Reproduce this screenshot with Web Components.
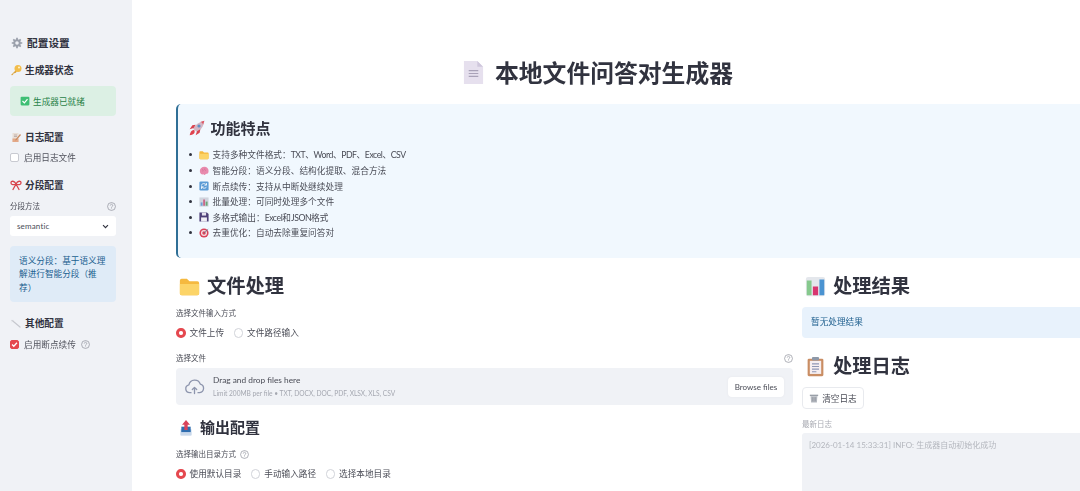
<!DOCTYPE html>
<html lang="zh">
<head>
<meta charset="utf-8">
<title>本地文件问答对生成器</title>
<style>
  html, body { margin: 0; height: 100%; overflow: hidden; background: #fff; }
  body {
    font-family: Lato, "Noto Sans CJK SC", "Noto Sans", sans-serif;
    color: #31333f;
  }
  /* reference latin is a narrower face than Lato */
  .tight { letter-spacing: -.45px; }
</style>
</head>
<body>

<app-shell>
  <side-bar slot="side">
    <side-head level="1" icon="gear" style="margin-top:0">配置设置</side-head>
    <side-head icon="key" style="margin-top:10px">生成器状态</side-head>
    <note-box kind="success" icon="check" style="margin-top:8px">生成器已就绪</note-box>
    <side-head icon="memo" style="margin-top:13px">日志配置</side-head>
    <check-row style="margin-top:5px">启用日志文件</check-row>
    <side-head icon="ribbon" style="margin-top:13px">分段配置</side-head>
    <field-label help style="margin-top:7px">分段方法</field-label>
    <select-box style="margin-top:4px">semantic</select-box>
    <note-box kind="info" style="margin-top:10px">语义分段：基于语义理解进行智能分段（推荐）</note-box>
    <side-head icon="wrench" style="margin-top:13px">其他配置</side-head>
    <check-row checked help style="margin-top:6px">启用断点续传</check-row>
  </side-bar>

  <main-area>
    <page-title>本地文件问答对生成器</page-title>
    <feature-card>
      <feature-item icon="folder">支持多种文件格式：<span class="tight">TXT、Word、PDF、Excel、CSV</span></feature-item>
      <feature-item icon="brain">智能分段：语义分段、结构化提取、混合方法</feature-item>
      <feature-item icon="arrows">断点续传：支持从中断处继续处理</feature-item>
      <feature-item icon="chart">批量处理：可同时处理多个文件</feature-item>
      <feature-item icon="floppy">多格式输出：<span class="tight">Excel</span>和<span class="tight">JSON</span>格式</feature-item>
      <feature-item icon="target">去重优化：自动去除重复问答对</feature-item>
    </feature-card>

    <two-cols>
      <div slot="left">
        <section-head icon="folder">文件处理</section-head>
        <field-label style="margin-top:7px">选择文件输入方式</field-label>
        <radio-row style="margin-top:7px">
          <radio-opt checked>文件上传</radio-opt>
          <radio-opt>文件路径输入</radio-opt>
        </radio-row>
        <field-label help style="margin-top:12px">选择文件</field-label>
        <file-drop style="margin-top:4px"></file-drop>
        <section-head small icon="outbox" style="margin-top:13px">输出配置</section-head>
        <field-label help="inline" style="margin-top:10px">选择输出目录方式</field-label>
        <radio-row style="margin-top:7px">
          <radio-opt checked>使用默认目录</radio-opt>
          <radio-opt>手动输入路径</radio-opt>
          <radio-opt>选择本地目录</radio-opt>
        </radio-row>
      </div>
      <div slot="right">
        <section-head icon="bars">处理结果</section-head>
        <note-box kind="info" wide style="margin-top:7px">暂无处理结果</note-box>
        <section-head icon="clipboard" style="margin-top:14px">处理日志</section-head>
        <plain-button icon="trash" style="margin-top:7px">清空日志</plain-button>
        <field-label muted style="margin-top:9px">最新日志</field-label>
        <log-area style="margin-top:3px">[2026-01-14 15:33:31] INFO: 生成器自动初始化成功</log-area>
      </div>
    </two-cols>
  </main-area>
</app-shell>

<script>
// all the little emoji are drawn here, viewBox is always 24x24
const ICONS = {
  gear: `<circle cx="12" cy="12" r="7.5" fill="#a4a9b3"/>
    <g stroke="#989ea9" stroke-width="3.4"><path d="M12 1.5v21M1.5 12h21M4.6 4.6l14.8 14.8M19.4 4.6 4.6 19.4"/></g>
    <circle cx="12" cy="12" r="3.6" fill="#eef0f4"/>`,
  key: `<path d="M2 22 11 13l3 2-3 3-1.500-.5-1 1.500-1.500-.3-.5 1.800-2 2z" fill="#d9a033"/>
    <circle cx="16" cy="9" r="7" fill="#f2bd4b"/><circle cx="18" cy="7" r="2" fill="#fff3cf"/>`,
  check: `<rect x="1.500" y="1.500" width="21" height="21" rx="2.500" fill="#3fbf74"/>
    <path d="m6 12 4.500 4.500 7.500-9" fill="none" stroke="#fff" stroke-width="2.800"/>`,
  memo: `<path d="M5 4h12v18H5z" fill="#e9dfd6"/><path d="M5 15h12v7H5z" fill="#e3a989"/>
    <path d="M8 8h6M8 11h6" stroke="#a99" stroke-width="1.300"/>
    <path d="m11 17 9-11 2 2-9 10-3 1z" fill="#c98a5e"/>`,
  ribbon: `<g fill="none" stroke="#d8444c" stroke-width="2.600" stroke-linecap="round">
    <path d="M12 10C9 3 2 3 2 8c0 4 6 4 10 2 4 2 10 2 10-2 0-5-7-5-10 2z"/>
    <path d="M12 10 6 21M12 10l6 11"/></g>`,
  wrench: `<path d="M4 7 8 10 20 20" fill="none" stroke="#c6c8ce" stroke-width="2.400" stroke-linecap="round"/>
    <path d="M3 10 8 6" stroke="#dcdee3" stroke-width="1.600"/>`,
  doc: `<path d="M2 0h14l6 6v18H2z" fill="#e6e0ee"/><path d="M16 0v6h6z" fill="#cfc7dc"/>
    <path d="M7 10h10M7 13h10M7 16h10" stroke="#a9a2b8" stroke-width="1.200"/>`,
  rocket: `<path d="M6 13C9 7 15 3 23 1c-1 8-5 14-11 17z" fill="#d3b6c4"/>
    <path d="M17 3c2 0 3.500 1.500 4 4l2-6z" fill="#e0535f"/>
    <circle cx="15" cy="9" r="2.400" fill="#5b93c9"/>
    <path d="M7 12 1 14l4-6 5-1zM12 17l-2 6 6-4 1-5z" fill="#d8434f"/>
    <path d="M8 15c-4-1-6 3-7 8 5-1 9-3 7-8z" fill="#e0434e"/>`,
  folder: `<path d="M1 5q0-2 2-2h6l3 3h9q2 0 2 2v12q0 2-2 2H3q-2 0-2-2z" fill="#f5b93f"/>
    <path d="M1 9h22v11q0 2-2 2H3q-2 0-2-2z" fill="#fcd468"/>`,
  brain: `<path d="M2 12c0-6 5-10 11-10s10 4 10 10-3 7-7 7c-1 3-4 3-5 1-6 1-9-3-9-8z" fill="#e88aad"/>
    <path d="M8 8c2 1 2 3 1 5M14 6c-1 2 0 4 2 5" fill="none" stroke="#c9668d" stroke-width="1.500"/>`,
  arrows: `<rect x="1" y="1" width="22" height="22" rx="3" fill="#5b9bd5"/>
    <g fill="none" stroke="#fff" stroke-width="2"><path d="M6 11c0-6 9-6 11-2M6 13c1 5 10 6 12 1"/><path d="M18 5v5h-5M6 19v-5h5"/></g>`,
  chart: `<rect x="1" y="1" width="22" height="22" fill="#cfd4dd"/>
    <path d="M4 21v-8h4.500v8z" fill="#6f9fd3"/><path d="M10 21V6h4.500v15z" fill="#c9678a"/><path d="M16 21v-10h4.500v10z" fill="#6aa776"/>`,
  floppy: `<path d="M1 1h18l4 4v18H1z" fill="#4d3f78"/><rect x="7" y="1.500" width="10" height="7" fill="#e5e1ee"/>
    <rect x="5" y="13" width="14" height="10" fill="#efedf4"/>`,
  target: `<circle cx="12" cy="12" r="11" fill="#d9435a"/><circle cx="12" cy="12" r="7.200" fill="#f3e3e6"/>
    <circle cx="12" cy="12" r="4.200" fill="#d9435a"/><path d="m12 12 10-9" stroke="#5a6f8a" stroke-width="1.800"/>`,
  outbox: `<path d="M4 14h16v9H4z" fill="#a9c2e0"/><path d="M5 10h14v8H5z" fill="#2f6eb0"/>
    <path d="M12 0 18 7h-3.500v8h-5V7H6z" fill="#d9435a"/><path d="M4 18.500h16V23H4z" fill="#c9d8ea"/>`,
  bars: `<rect x="1" y="1" width="22" height="22" rx="2.500" fill="#e4e7ec"/>
    <path d="M2 5h5.500v17H3q-1 0-1-1z" fill="#86c98d"/><path d="M9 12h6v10H9z" fill="#d8366f"/>
    <path d="M16.500 4H22v17q0 1-1 1h-4.500z" fill="#4a93d1"/>`,
  clipboard: `<rect x="3" y="3" width="18" height="20" rx="1.500" fill="#c98d63"/>
    <rect x="5.500" y="5.500" width="13" height="15" fill="#f6eef0"/><rect x="8" y="1" width="8" height="4" rx="1" fill="#8d98a8"/>
    <path d="M8 9h8M8 12h8M8 15h8M8 18h5" stroke="#8f97b5" stroke-width="1.200"/>`,
  trash: `<path d="M2 4h20v3.500H2z" fill="#9aa0a8"/><path d="M4 7.500h16l-1 15H5z" fill="#b4b8bf"/>
    <path d="M8.500 10v10M12 10v10M15.500 10v10" stroke="#8a9098" stroke-width="1.300"/>`,
  cloud: `<g fill="none" stroke="#8d95ad" stroke-width="1.500" stroke-linejoin="round" stroke-linecap="round">
    <path d="M8 19H6.500a4.500 4.500 0 0 1-.9-8.900A6.800 6.800 0 0 1 18.600 9.200 5 5 0 0 1 18 19h-2"/>
    <path d="M12 20v-7M9.500 15.500 12 13l2.500 2.500"/></g>`
};

function define(tag, css, html, init) {
  customElements.define(tag, class extends HTMLElement {
    constructor() {
      super();
      let root = this.attachShadow({mode: 'open'});
      root.innerHTML = `<style>${css}</style>` + (typeof html === 'function' ? html(this) : html);
    }
    connectedCallback() {
      let root = this.shadowRoot;
      if (init && !this._done) { this._done = true; init(this, root); }
    }
  });
}

// a help circle used beside labels and checkboxes
const HELP = `<svg width="9" height="9" viewBox="0 0 16 16" fill="none" stroke="#8b8d98" stroke-width="1.200"><circle cx="8" cy="8" r="7"/><path d="M5.800 6.200a2.200 2.200 0 1 1 3.400 1.900c-.8.500-1.200 1-1.200 1.900M8 11.600v1"/></svg>`;

define('x-icon', ':host{display:inline-flex;flex:none} svg{display:block}', '', (el, root) => {
  let s = el.getAttribute('size') || 12;
  root.innerHTML += `<svg width="${s}" height="${s}" viewBox="0 0 24 24">${ICONS[el.getAttribute('name')]}</svg>`;
});

// the reference is a soft, rescaled capture, hence the small blur
define('app-shell', `
  :host { display: grid; grid-template-columns: 132px 1fr; height: 491px; overflow: hidden; filter: blur(.35px); }
`, `<slot name="side"></slot><slot></slot>`);

define('side-bar', `
  :host { display: block; background: #f0f2f6; padding: 34px 16px 0 10px; height: 491px; box-sizing: border-box; }
`, `<slot></slot>`);

define('side-head', `
  :host { display: flex; align-items: center; gap: 3px; font-size: 9.700px; font-weight: 700; line-height: 16px; color: #31333f; }
  :host([level="1"]) { font-size: 10.700px; line-height: 18px; gap: 4px; padding-left: 1px; }
`, el => `<x-icon name="${el.getAttribute('icon')}" size="12"></x-icon><slot></slot>`);

define('note-box', `
  :host { display: block; border-radius: 4px; font-size: 8.650px; box-sizing: border-box; }
  :host([kind="success"]) { background: #dcf0e4; color: #2a8248; height: 30px; padding: 0 10px; display: flex; align-items: center; gap: 3px; }
  :host([kind="info"]) { background: #dfebf7; color: #20608f; padding: 7.500px 9px 8px 9px; line-height: 13.500px; }
  :host([wide]) { background: #e8f2fc; height: 31px; padding: 0 9px; line-height: 30px; }
`, el => (el.getAttribute('icon') ? `<x-icon name="${el.getAttribute('icon')}" size="10"></x-icon>` : '') + `<slot></slot>`);

define('check-row', `
  :host { display: flex; align-items: center; gap: 5px; font-size: 8.650px; line-height: 14px; color: #50525c; }
  .box { width: 9px; height: 9px; border-radius: 2px; background: #fff; border: 1px solid #c8cad1; box-sizing: border-box; flex: none; }
  :host([checked]) .box { background: #e5484f; border-color: #e5484f; position: relative; }
  svg { display: block; }
  .tip { margin-left: 0; display: inline-flex; }
  .t { position: relative; top: .5px; }
`, el => `<span class="box">${el.hasAttribute('checked') ? '<svg width="7" height="7" viewBox="0 0 10 10"><path d="m1.500 5 2.500 2.500 4.500-5" fill="none" stroke="#fff" stroke-width="1.800"/></svg>' : ''}</span><span class="t"><slot></slot></span>${el.hasAttribute('help') ? `<span class="tip">${HELP}</span>` : ''}`);

define('field-label', `
  :host { display: flex; align-items: center; font-size: 7.500px; line-height: 12px; height: 12px; color: #4a4c56; }
  :host([muted]) { color: #a9abb3; }
  .t { position: relative; top: .7px; }
  .tip { margin-left: auto; display: inline-flex; }
  :host([help="inline"]) .tip { margin-left: 4px; }
`, el => `<span class="t"><slot></slot></span>${el.hasAttribute('help') ? `<span class="tip">${HELP}</span>` : ''}`);

define('select-box', `
  :host { display: flex; align-items: center; justify-content: space-between; height: 20px; background: #fff; border-radius: 3px; padding: 0 7px; font-size: 8px; color: #4a4c56; letter-spacing: .15px; }
  svg { display: block; }
`, `<slot></slot><svg width="7" height="5" viewBox="0 0 10 7"><path d="m1.500 1.500 3.500 3.500 3.500-3.500" fill="none" stroke="#31333f" stroke-width="1.700"/></svg>`);

define('main-area', `
  :host { display: block; padding: 52px 0 0 44px; width: 950px; overflow: hidden; }
`, `<slot></slot>`);

define('page-title', `
  :host { display: flex; justify-content: center; align-items: center; gap: 10px; width: 843px; height: 40px; font-size: 23.800px; font-weight: 700; color: #31333f; }
  .t { position: relative; top: -1px; }
`, `<x-icon name="doc" size="23"></x-icon><span class="t"><slot></slot></span>`);

define('feature-card', `
  :host { display: block; margin-top: 12px; height: 154px; box-sizing: border-box; background: #f1f8fe; border-left: 2.500px solid #2f6f96; border-radius: 5px; padding: 14px 0 0 10.500px; }
  h3 { margin: 0; display: flex; align-items: center; gap: 6px; font-size: 15px; line-height: 20px; font-weight: 700; color: #31333f; }
  .list { margin-top: 9.200px; }
`, `<h3><x-icon name="rocket" size="16"></x-icon>功能特点</h3><div class="list"><slot></slot></div>`);

define('feature-item', `
  :host { display: flex; align-items: center; height: 15.600px; font-size: 8.700px; color: #4a4c56; position: relative; }
  .dot { width: 3px; height: 3px; border-radius: 50%; background: #31333f; margin-left: .5px; margin-right: 7px; flex: none; }
  x-icon { margin-right: 3.500px; }
  .t { white-space: pre; }
`, el => `<span class="dot"></span><x-icon name="${el.getAttribute('icon')}" size="10"></x-icon><span class="t"><slot></slot></span>`);

define('two-cols', `
  :host { display: grid; grid-template-columns: 617px 1fr; gap: 9px; margin-top: 14px; }
`, `<slot name="left"></slot><slot name="right"></slot>`);

define('section-head', `
  :host { display: flex; align-items: center; gap: 7px; height: 28px; font-size: 19.300px; font-weight: 700; color: #31333f; padding-left: 3px; }
  .t { position: relative; top: -.7px; }
  :host([small]) { height: 20px; font-size: 15px; gap: 6px; padding-left: 2px; }
  :host([small]) .t { top: -1.500px; }
`, el => `<x-icon name="${el.getAttribute('icon')}" size="${el.hasAttribute('small') ? 16 : 21}"></x-icon><span class="t"><slot></slot></span>`);

define('radio-row', `
  :host { display: flex; gap: 9.500px; }
`, `<slot></slot>`);

define('radio-opt', `
  :host { display: flex; align-items: center; gap: 4px; font-size: 8.650px; line-height: 14px; color: #4a4c56; }
  .dot { width: 9.500px; height: 9.500px; border-radius: 50%; box-sizing: border-box; border: 1px solid #d0d2d8; background: #fff; flex: none; }
  :host([checked]) .dot { border: 3.200px solid #e5484f; }
`, `<span class="dot"></span><slot></slot>`);

define('file-drop', `
  :host { display: flex; align-items: center; height: 37px; background: #f0f2f6; border-radius: 4px; padding: 0 9px 0 8px; }
  .txt { margin-left: 8px; flex: 1; }
  .a { font-size: 8.300px; line-height: 13px; color: #4a4c56; }
  .b { font-size: 6.600px; line-height: 13px; color: #a4a7b0; }
  button { font: inherit; font-size: 8px; color: #4a4c56; background: #fff; border: 0; box-shadow: 0 0 2px #e4e6ea; border-radius: 4px; height: 20px; width: 56px; padding: 0; }
`, `<x-icon name="cloud" size="21"></x-icon>
   <div class="txt"><div class="a">Drag and drop files here</div><div class="b">Limit 200MB per file • TXT, DOCX, DOC, PDF, XLSX, XLS, CSV</div></div>
   <button>Browse files</button>`);

define('plain-button', `
  :host { display: flex; width: 62px; height: 22px; box-sizing: border-box; align-items: center; justify-content: center; gap: 3px; border: 1px solid #e8eaee; border-radius: 4px; font-size: 8.650px; color: #4a4c56; background: #fff; }
`, el => `<x-icon name="${el.getAttribute('icon')}" size="10"></x-icon><slot></slot>`);

define('log-area', `
  :host { display: block; height: 70px; background: #f0f2f6; border-radius: 3px 0 0 0; padding: 6px 7px; box-sizing: border-box; font-size: 8px; line-height: 12px; color: #b3b6bd; }
`, `<slot></slot>`);
</script>
</body>
</html>
